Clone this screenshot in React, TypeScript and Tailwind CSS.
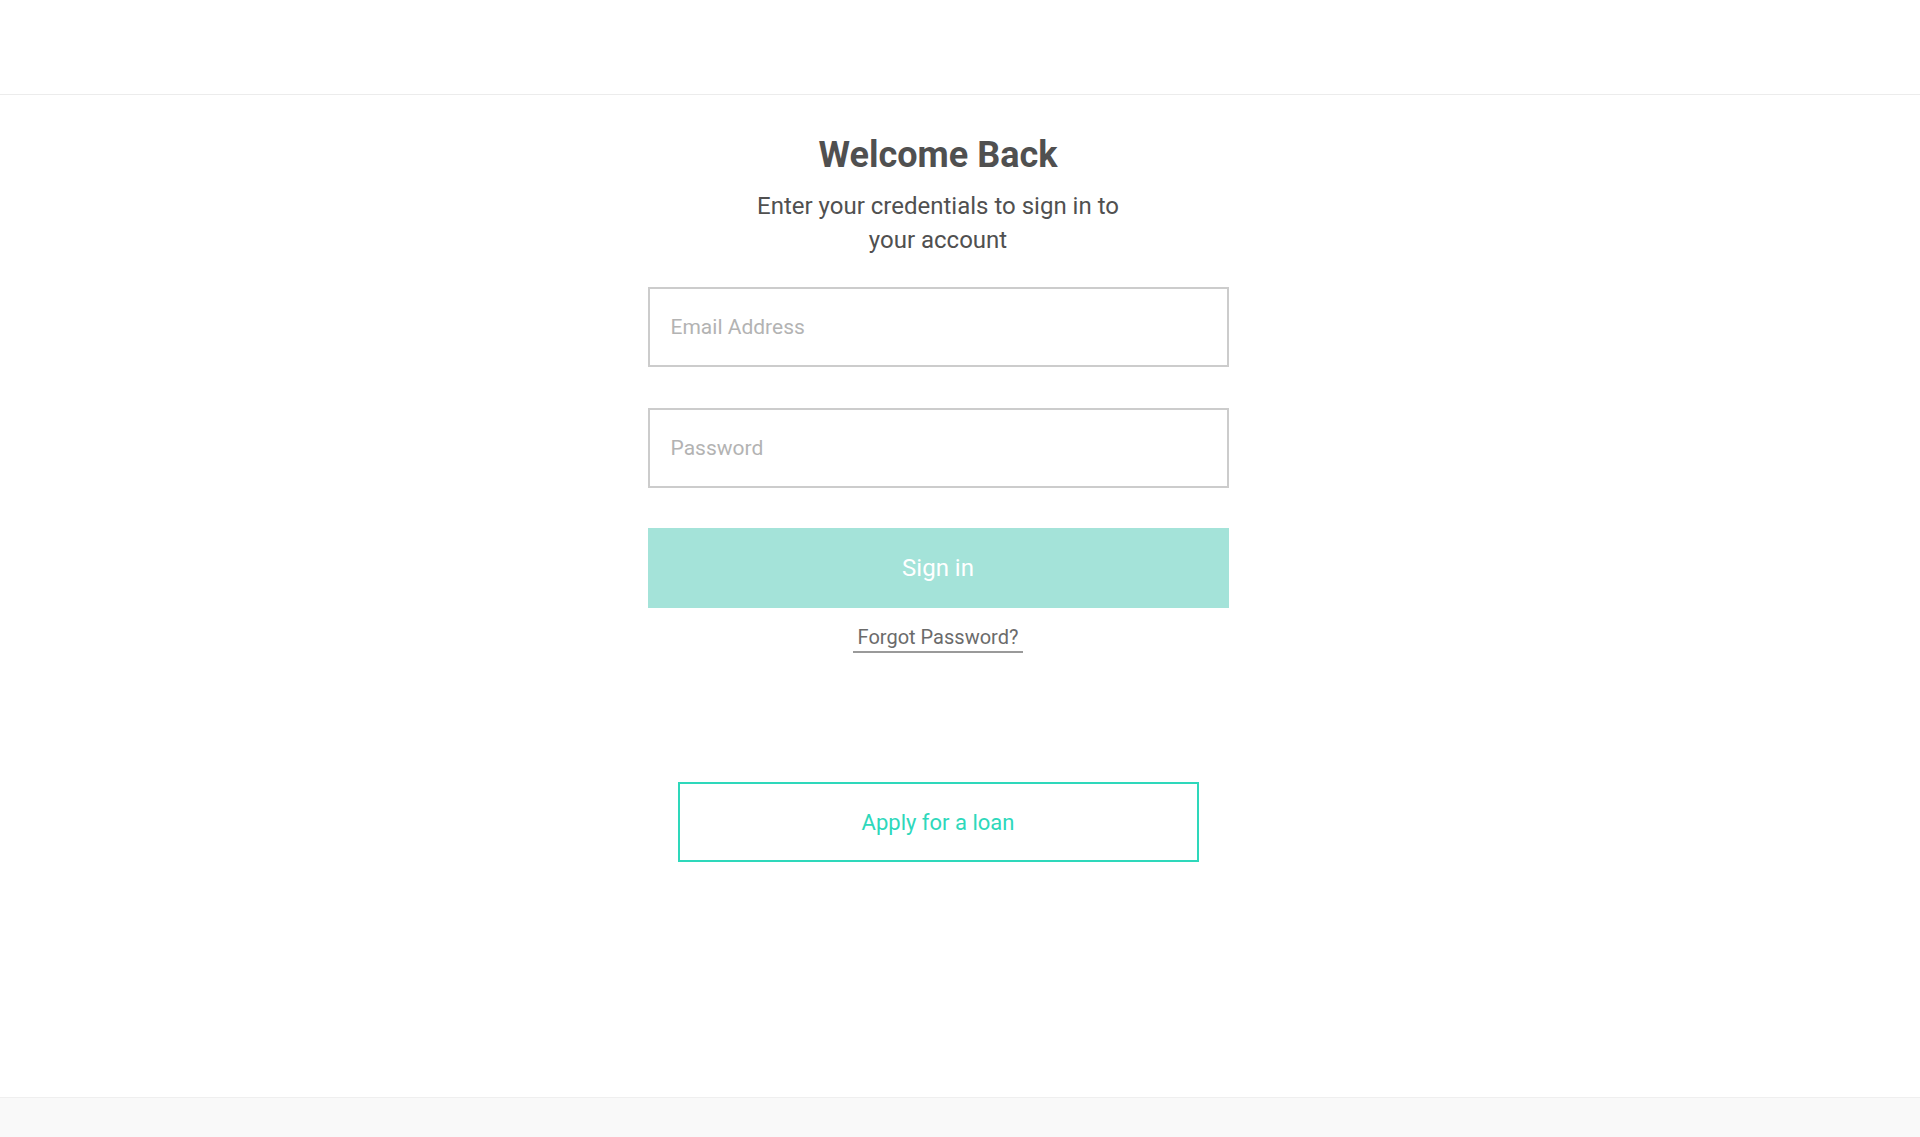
import React from 'react';

const font = { fontFamily: 'Roboto, "Open Sans", sans-serif' };

const App = () => {
    return (
        <div className="min-h-screen flex flex-col bg-white" style={font}>
            {/* top bar */}
            <header className="h-[95px] border-b border-[#ececec] bg-white" />

            <main className="flex-1 flex flex-col items-center pt-[38px] pr-[44px]">
                <h1 className="text-[36px] leading-[44px] font-bold text-[#505050]">Welcome Back</h1>
                <p className="mt-[12px] w-[400px] text-center text-[24px] leading-[34px] text-[#505050]">
                    Enter your credentials to sign in to your account
                </p>

                <form className="mt-[30px] w-[581px] flex flex-col" onSubmit={(e) => e.preventDefault()}>
                    <input
                        type="email"
                        placeholder="Email Address"
                        className="h-[80px] w-full border-2 border-[#cccccc] px-[21px] text-[21px] text-[#505050] placeholder:text-[#b3b3b3] outline-none"
                    />
                    <input
                        type="password"
                        placeholder="Password"
                        className="mt-[41px] h-[80px] w-full border-2 border-[#cccccc] px-[21px] text-[21px] text-[#505050] placeholder:text-[#b3b3b3] outline-none"
                    />
                    <button
                        type="submit"
                        className="mt-[40px] h-[80px] w-full bg-[#a4e3d9] text-[24px] text-white"
                    >
                        Sign in
                    </button>
                    <div className="mt-[16px] flex justify-center">
                        <a href="#" className="px-[5px] pb-[1px] border-b-2 border-[#9a9a9a] text-[20px] leading-[26px] text-[#6b6b6b]">
                            Forgot Password?
                        </a>
                    </div>
                </form>

                <a
                    href="#"
                    className="mt-[129px] h-[80px] w-[521px] flex items-center justify-center border-2 border-[#2ed8bb] text-[22px] text-[#2ed8bb]"
                >
                    Apply for a loan
                </a>
            </main>

            <footer className="h-[40px] border-t border-[#efefef] bg-[#f9f9f9]" />
        </div>
    );
};

export default App;
